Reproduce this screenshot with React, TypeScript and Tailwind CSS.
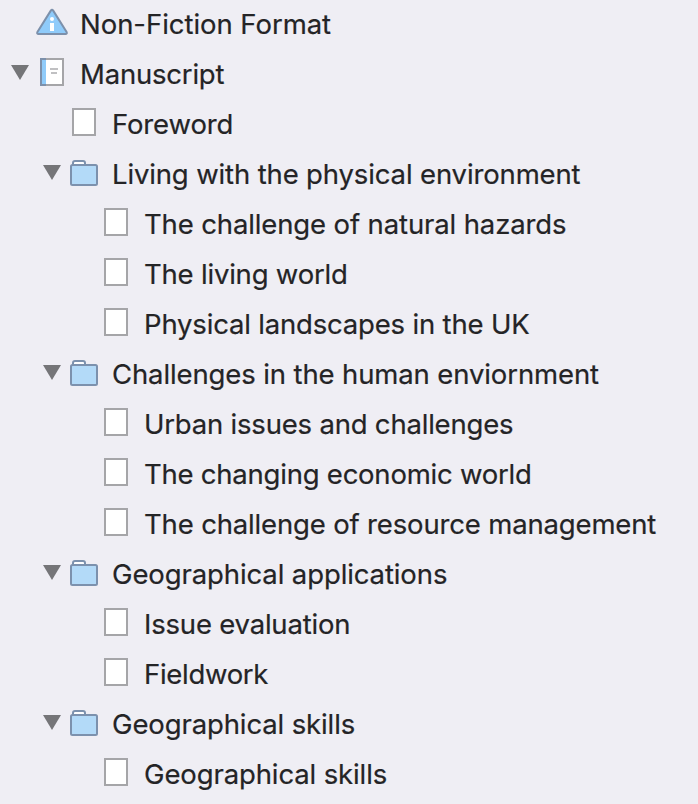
type Kind = 'info' | 'book' | 'page' | 'folder';
type Row = { label: string; kind: Kind; indent: string; open?: boolean; tracking: string };

const L0 = 'pl-[11px]';
const L1 = 'pl-[43px]';
const L2 = 'pl-[75px]';

const rows: Row[] = [
  { label: 'Non-Fiction Format', kind: 'info', indent: L0, tracking: 'tracking-[-0.04px]' },
  { label: 'Manuscript', kind: 'book', indent: L0, open: true, tracking: 'tracking-[-0.2px]' },
  { label: 'Foreword', kind: 'page', indent: L1, tracking: 'tracking-[-0.14px]' },
  { label: 'Living with the physical environment', kind: 'folder', indent: L1, open: true, tracking: 'tracking-[-0.14px]' },
  { label: 'The challenge of natural hazards', kind: 'page', indent: L2, tracking: 'tracking-[-0.13px]' },
  { label: 'The living world', kind: 'page', indent: L2, tracking: 'tracking-[-0.2px]' },
  { label: 'Physical landscapes in the UK', kind: 'page', indent: L2, tracking: 'tracking-[-0.18px]' },
  { label: 'Challenges in the human enviornment', kind: 'folder', indent: L1, open: true, tracking: 'tracking-[-0.12px]' },
  { label: 'Urban issues and challenges', kind: 'page', indent: L2, tracking: 'tracking-[-0.2px]' },
  { label: 'The changing economic world', kind: 'page', indent: L2, tracking: 'tracking-[-0.23px]' },
  { label: 'The challenge of resource management', kind: 'page', indent: L2, tracking: 'tracking-[-0.16px]' },
  { label: 'Geographical applications', kind: 'folder', indent: L1, open: true, tracking: 'tracking-[-0.11px]' },
  { label: 'Issue evaluation', kind: 'page', indent: L2, tracking: 'tracking-[-0.2px]' },
  { label: 'Fieldwork', kind: 'page', indent: L2, tracking: 'tracking-[-0.3px]' },
  { label: 'Geographical skills', kind: 'folder', indent: L1, open: true, tracking: 'tracking-[-0.12px]' },
  { label: 'Geographical skills', kind: 'page', indent: L2, tracking: 'tracking-[-0.12px]' },
];

function Icon({ kind }: { kind: Kind }) {
  return (
    <svg viewBox="0 0 32 50" className="ml-[7px] h-[50px] w-8 shrink-0">
      {kind === 'info' && (
        <>
          <path d="M14.8 10.6Q16 9 17.2 10.6L30.6 32Q31.4 34 29.4 34H2.6Q.6 34 1.4 32Z" fill="#8fcbfa" stroke="#7c90ab" strokeWidth="2" strokeLinejoin="round" />
          <circle cx="16" cy="19" r="2" fill="#fff" />
          <path d="M14 23h4v8h-4z" fill="#fff" />
        </>
      )}
      {kind === 'book' && (
        <>
          <path d="M5 9h22v26H5z" fill="#fff" stroke="#a5a5a8" strokeWidth="2" />
          <path d="M4 8h6v28H4z" fill="#8fcbfa" />
          <path d="M10 9H5v26h5" fill="none" stroke="#7c90ab" strokeWidth="2" />
          <path d="M14 19h8M15 23h6" stroke="#c0c0c2" strokeWidth="2" />
        </>
      )}
      {kind === 'page' && <path d="M5 9h22v26H5z" fill="#fff" stroke="#a5a5a8" strokeWidth="2" />}
      {kind === 'folder' && (
        <>
          <path d="M5 15v-2q0-2 2-2h8q2 0 2 2v2" fill="#fff" stroke="#7c91ad" strokeWidth="2" />
          <rect x="3" y="15" width="26" height="20" rx="1.5" fill="#b3daf8" stroke="#7c91ad" strokeWidth="2" />
        </>
      )}
    </svg>
  );
}

export default function App() {
  return (
    <main className="flex h-[804px] w-[698px] flex-col overflow-hidden bg-[#efeef4] font-['Inter',sans-serif] text-[27.5px] text-[#242426] [-webkit-text-stroke:0.2px_#242426]">
      {rows.map((row, i) => (
        <div key={i} className={`flex h-[50px] shrink-0 ${row.indent}`}>
          <svg viewBox="0 0 18 50" className="h-[50px] w-[18px] shrink-0">
            {row.open && <path d="M0 15h18L9 30z" fill="#757578" />}
          </svg>
          <Icon kind={row.kind} />
          <span className={`ml-[12px] whitespace-nowrap leading-[48px] ${row.tracking}`}>{row.label}</span>
        </div>
      ))}
    </main>
  );
}
